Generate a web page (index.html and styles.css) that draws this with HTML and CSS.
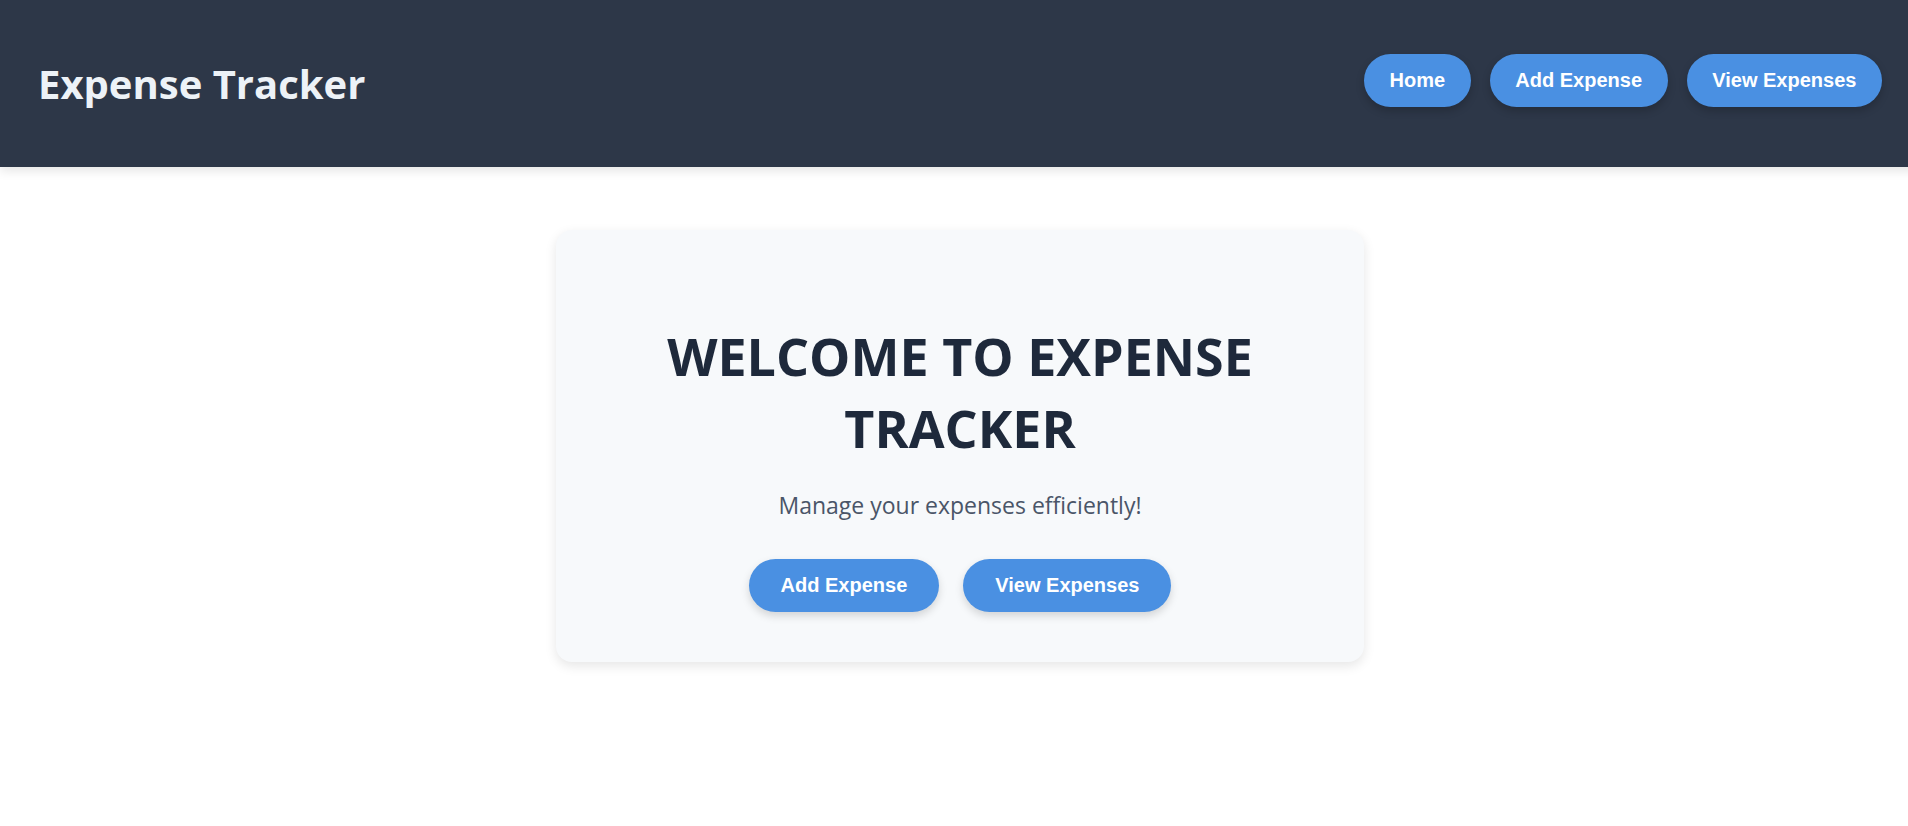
FILE: index.html
```html
<!DOCTYPE html>
<html lang="en">
<head>
<meta charset="utf-8">
<title>Expense Tracker</title>
<link rel="stylesheet" href="styles.css">
</head>
<body>
<div class="page">
  <header class="topbar">
    <h1 class="brand">Expense Tracker</h1>
    <nav class="nav">
      <a class="btn btn-nav" href="#">Home</a>
      <a class="btn btn-nav" href="#">Add Expense</a>
      <a class="btn btn-nav" href="#">View Expenses</a>
    </nav>
  </header>
  <main class="main">
    <section class="card">
      <h2 class="card-title">WELCOME TO EXPENSE TRACKER</h2>
      <p class="card-text">Manage your expenses efficiently!</p>
      <div class="actions">
        <a class="btn btn-card" href="#">Add Expense</a>
        <a class="btn btn-card" href="#">View Expenses</a>
      </div>
    </section>
  </main>
</div>
</body>
</html>
```

FILE: styles.css
```css
html, body {
  margin: 0;
  padding: 0;
  overflow: hidden;
  background: #ffffff;
}

.page {
  width: 1920px;
  min-height: 826px;
  font-family: "Open Sans", "Noto Sans", sans-serif;
}

.topbar {
  height: 167px;
  box-sizing: border-box;
  padding: 0 38px;
  background: #2d3748;
  display: flex;
  align-items: center;
  justify-content: space-between;
  box-shadow: 0 4px 10px rgba(0, 0, 0, 0.1);
  position: relative;
  z-index: 1;
}

.brand {
  margin: 0;
  font-size: 40px;
  font-weight: 700;
  color: #edf2f7;
  line-height: 1.2;
}

.nav {
  display: flex;
  gap: 19px;
  margin-top: -6px;
}

.btn {
  display: inline-block;
  font-family: "Liberation Sans", Arial, sans-serif;
  font-weight: 700;
  font-size: 20px;
  line-height: 23px;
  color: #ffffff;
  background: #4a90e2;
  text-decoration: none;
  border-radius: 30px;
  padding: 15px 25.6px;
}

.btn-nav {
  box-shadow: 0 4px 8px rgba(0, 0, 0, 0.2);
}

.main {
  display: flex;
  justify-content: center;
  padding-top: 63px;
}

.card {
  width: 808px;
  box-sizing: border-box;
  background: #f7f9fb;
  border-radius: 16px;
  padding: 48px 48px 50px;
  text-align: center;
  box-shadow: 0 4px 12px rgba(0, 0, 0, 0.1);
}

.card-title {
  margin: 42px 0 0;
  font-size: 52px;
  line-height: 72px;
  font-weight: 700;
  color: #1e293b;
}

.card-text {
  margin: 25px 0 0;
  font-size: 23px;
  line-height: 32px;
  color: #4a5568;
}

.actions {
  display: flex;
  justify-content: center;
  gap: 24px;
  margin-top: 38px;
}

.btn-card {
  padding: 15px 32px;
  box-shadow: 0 4px 8px rgba(0, 0, 0, 0.15);
}
```
